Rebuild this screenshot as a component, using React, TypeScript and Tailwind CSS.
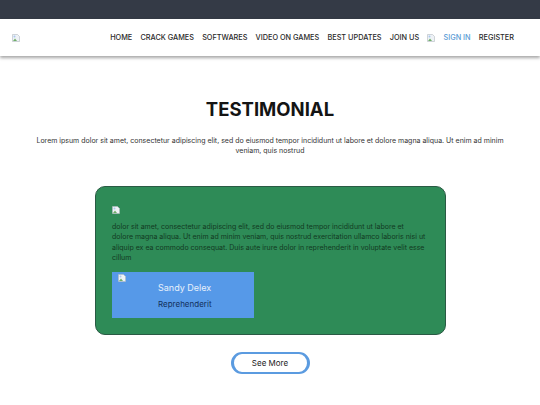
const font = { fontFamily: '"Inter", "Open Sans", sans-serif' };

const BrokenImage = ({ className = '' }: { className?: string }) => (
  <svg className={className} width="8" height="8" viewBox="0 0 8 8">
    <path d="M0.5 0.5H5.5L7.5 2.5V7.5H0.5Z" fill="#eef2f6" stroke="#b4bac1" strokeWidth="0.6" />
    <path d="M1 7L3 4.5L5 7Z" fill="#6fae68" />
    <circle cx="2.5" cy="2.5" r="1" fill="#a9c6ee" />
  </svg>
);

const navLinks = ['HOME', 'CRACK GAMES', 'SOFTWARES', 'VIDEO ON GAMES', 'BEST UPDATES', 'JOIN US'];

export default function App() {
  return (
    <div style={font} className="min-h-[405px] bg-white text-[#1a1a1a] overflow-hidden">
      <div className="h-[19px] bg-[#343a46]" />

      <header className="h-[37px] flex items-center justify-between pl-[12px] pr-[26px] pt-[1px] bg-white shadow-[0_2px_3px_rgba(0,0,0,0.35)]">
        <BrokenImage />
        <nav className="flex items-center gap-[8.2px] text-[7.3px] font-medium text-[#2a2a2a]">
          {navLinks.map((link) => (
            <a key={link}>{link}</a>
          ))}
          <BrokenImage />
          <a className="text-[#5b9bd5]">SIGN IN</a>
          <a>REGISTER</a>
        </nav>
      </header>

      <main className="flex flex-col items-center">
        <h1 className="mt-[39px] text-[18.5px] leading-[28px] font-bold text-[#141414]">TESTIMONIAL</h1>
        <p className="mt-[13px] w-[480px] text-center text-[7px] leading-[10px] text-[#333]">
          Lorem ipsum dolor sit amet, consectetur adipiscing elit, sed do eiusmod tempor incididunt ut labore et dolore magna aliqua. Ut enim ad minim veniam, quis nostrud
        </p>

        <section className="mt-[30px] w-[351px] h-[149px] bg-[#2e8b57] border border-[#2a5a44] rounded-[10px] pl-[16.5px] pt-[19px]">
          <BrokenImage />
          <p className="mt-[8px] w-[314px] text-[7px] leading-[10.4px] text-[#123a22]">
            dolor sit amet, consectetur adipiscing elit, sed do eiusmod tempor incididunt ut labore et dolore magna aliqua. Ut enim ad minim veniam, quis nostrud exercitation ullamco laboris nisi ut aliquip ex ea commodo consequat. Duis aute irure dolor in reprehenderit in voluptate velit esse cillum
          </p>
          <div className="mt-[8px] w-[142px] h-[46px] bg-[#5699e8] pl-[6px] pt-[2px] flex">
            <BrokenImage />
            <div className="ml-[32px] pt-[8px]">
              <div className="text-[9px] leading-[12px] text-[#e6f0fb]">Sandy Delex</div>
              <div className="mt-[5px] text-[8px] leading-[10px] text-[#12305c]">Reprehenderit</div>
            </div>
          </div>
        </section>

        <button className="mt-[17px] w-[79px] h-[22px] rounded-full bg-white border-y-2 border-x-[3px] border-[#5b9be0] text-[8px] text-[#222]">
          See More
        </button>
      </main>
    </div>
  );
}
